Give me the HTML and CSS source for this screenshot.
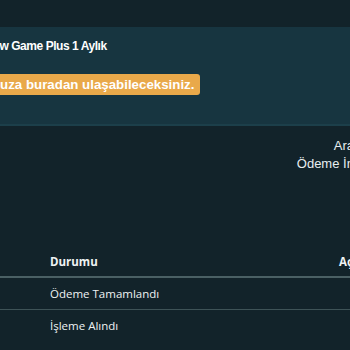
FILE: index.html
```html
<!DOCTYPE html>
<html lang="tr">
<head>
<meta charset="utf-8">
<link rel="stylesheet" href="styles.css">
</head>
<body>
<div class="page">
  <header class="topbar"></header>
  <section class="panel">
    <h2 class="title">New Game Plus 1 Aylık</h2>
    <div class="notice">Kodunuza buradan ulaşabileceksiniz.</div>
  </section>
  <section class="summary">
    <div class="summary-lines">
      <div class="line">Ara Toplam:</div>
      <div class="line">Ödeme İndirimleri:</div>
    </div>
  </section>
  <table class="orders">
    <thead>
      <tr><th class="c-date">Tarih</th><th class="c-status">Durumu</th><th class="c-desc">Açıklama</th></tr>
    </thead>
    <tbody>
      <tr><td class="c-date"></td><td class="c-status">Ödeme Tamamlandı</td><td class="c-desc"></td></tr>
      <tr class="last"><td class="c-date"></td><td class="c-status">İşleme Alındı</td><td class="c-desc"></td></tr>
    </tbody>
  </table>
</div>
</body>
</html>
```
FILE: styles.css
```css
html, body {
  margin: 0;
  padding: 0;
  background: #12232a;
  overflow: hidden;
}
.page {
  width: 350px;
  height: 350px;
  overflow: hidden;
  font-family: "Liberation Sans", Arial, sans-serif;
  color: #ffffff;
}
.topbar {
  height: 27px;
  background: #12232a;
}
.panel {
  background: #173540;
  height: 85px;
  border-bottom: 2px solid #1c3f4a;
  padding-top: 12px;
}
.title {
  margin: 0 0 0 -15px;
  font-size: 12px;
  font-weight: bold;
  letter-spacing: -0.45px;
  line-height: 14px;
  white-space: nowrap;
}
.notice {
  display: inline-block;
  margin: 21px 0 0 -72px;
  padding: 3px 6px 3px 30px;
  background: #e9a94a;
  color: #ffffff;
  font-size: 13.3px;
  font-weight: bold;
  line-height: 15px;
  border-radius: 3px;
  white-space: nowrap;
}
.summary {
  display: flex;
  justify-content: flex-end;
  margin-right: -53px;
  padding-top: 11px;
  height: 117px;
}
.summary-lines {
  display: flex;
  flex-direction: column;
  align-items: flex-end;
  font-size: 13px;
  line-height: 18px;
  color: #e8eef0;
  white-space: nowrap;
}
.orders {
  border-collapse: collapse;
  margin-left: -60px;
  width: 500px;
  font-family: "Open Sans", "Noto Sans", sans-serif;
  font-size: 11.5px;
  color: #eef2f3;
}
.orders th {
  text-align: left;
  font-weight: bold;
  padding: 0 0 7px 0;
  height: 15px;
  border-bottom: 2px solid #4a6064;
  white-space: nowrap;
}
.orders td {
  padding: 0;
  height: 31px;
  border-bottom: 1px solid #3e5357;
  white-space: nowrap;
}
.orders tr.last td { border-bottom: none; }
.c-date { width: 110px; color: transparent; }
.c-status { width: 289px; }
.c-desc { width: auto; }
```
